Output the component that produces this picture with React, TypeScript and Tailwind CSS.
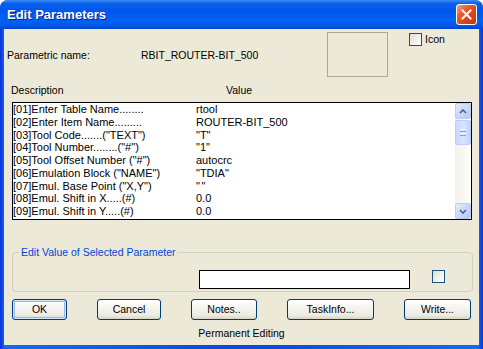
import React from "react";

const rows: [string, string][] = [
  ["[01]Enter Table Name........", "rtool"],
  ["[02]Enter Item Name.........", "ROUTER-BIT_500"],
  ["[03]Tool Code.......(\"TEXT\")", "\"T\""],
  ["[04]Tool Number........(\"#\")", "\"1\""],
  ["[05]Tool Offset Number (\"#\")", "autocrc"],
  ["[06]Emulation Block (\"NAME\")", "\"TDIA\""],
  ["[07]Emul. Base Point (\"X,Y\")", "\"\""],
  ["[08]Emul. Shift in X.....(#)", "0.0"],
  ["[09]Emul. Shift in Y.....(#)", "0.0"],
];

function XPCheck() {
  return (
    <div className="w-[13px] h-[13px] border border-[#1c5180] bg-[linear-gradient(135deg,#dcdcd7_0%,#f3f3f0_60%,#ffffff_100%)] shrink-0" />
  );
}

function XPButton({ label, w, def }: { label: string; w: string; def?: boolean }) {
  return (
    <div
      className={`${w} h-[21px] rounded-[3px] border border-[#003c74] bg-[linear-gradient(180deg,#ffffff_0%,#f5f4ef_40%,#ecebe4_80%,#d8d4c8_100%)] flex items-center justify-center ${
        def ? "shadow-[inset_0_0_0_1px_#cee7ff,inset_0_0_0_2px_#98b8ea]" : ""
      }`}
    >
      <span className="leading-[13px]">{label}</span>
    </div>
  );
}

function ScrollBtn({ up }: { up?: boolean }) {
  return (
    <div className="w-[16px] h-[16px] rounded-[2px] border border-[#b9cdf8] bg-[linear-gradient(135deg,#e3ebfd_0%,#c9d8fc_50%,#b5c9f8_100%)] flex items-center justify-center">
      <svg width="8" height="5" viewBox="0 0 8 5">
        <path
          d={up ? "M1 4 L4 1 L7 4" : "M1 1 L4 4 L7 1"}
          fill="none"
          stroke="#4d6185"
          strokeWidth="1.6"
        />
      </svg>
    </div>
  );
}

export default function App() {
  return (
    <div
      className="w-[483px] h-[349px] rounded-t-[8px] bg-[linear-gradient(90deg,#0831d9_0%,#166aee_1%,#0a48dd_50%,#166aee_99%,#0831d9_100%)] flex flex-col overflow-hidden text-black"
      style={{ fontFamily: '"Liberation Sans", Arial, sans-serif' }}
    >
      {/* Title bar */}
      <div className="h-[29px] shrink-0 flex items-center pl-[7px] pr-[6px] bg-[linear-gradient(180deg,#3d8cf5_0%,#0a60ea_12%,#0056ea_35%,#0062f5_70%,#0058e8_88%,#0042cc_100%)]">
        <span className="text-white font-bold text-[13px] leading-[16px] [text-shadow:1px_1px_0_#0a1b8f] flex-1 pt-[1px]">
          Edit Parameters
        </span>
        <div className="w-[21px] h-[21px] rounded-[3px] border border-white bg-[linear-gradient(135deg,#f4a58c_0%,#e85a2c_35%,#d4431a_70%,#c0380e_100%)] flex items-center justify-center">
          <svg width="11" height="11" viewBox="0 0 11 11">
            <path d="M1.5 1.5 L9.5 9.5 M9.5 1.5 L1.5 9.5" stroke="white" strokeWidth="2" strokeLinecap="square" />
          </svg>
        </div>
      </div>

      {/* Body */}
      <div className="flex-1 mx-[4px] mb-[4px] bg-[#ece9d8] flex flex-col text-[10.5px]">
        {/* Top row */}
        <div className="h-[54px] flex items-start pt-[3px] shrink-0">
          <div className="w-[323px] pl-[3px] pt-[17px] flex leading-[13px]">
            <span className="w-[134px]">Parametric name:</span>
            <span>RBIT_ROUTER-BIT_500</span>
          </div>
          <div className="w-[61px] h-[45px] border border-[#aca899]" />
          <div className="ml-[21px] mt-[1px] flex items-center gap-[3px]">
            <XPCheck />
            <span className="leading-[13px]">Icon</span>
          </div>
        </div>

        {/* Header */}
        <div className="h-[19px] shrink-0 flex pt-[1px] leading-[13px]">
          <span className="w-[222px] pl-[7px]">Description</span>
          <span>Value</span>
        </div>

        {/* List */}
        <div className="ml-[8px] w-[460px] h-[118px] border border-black bg-white flex shrink-0">
          <div className="flex-1 overflow-hidden text-[11px]">
            {rows.map(([d, v]) => (
              <div key={d} className="flex leading-[12.75px] whitespace-nowrap">
                <span className="w-[183px]">{d}</span>
                <span className={v === '""' ? "tracking-[1.5px]" : ""}>{v}</span>
              </div>
            ))}
          </div>
          <div className="w-[16px] flex flex-col bg-[linear-gradient(90deg,#f3f1ec_0%,#fefefb_100%)]">
            <ScrollBtn up />
            <div className="w-[16px] h-[25px] mt-[1px] rounded-[2px] border border-[#b9cdf8] bg-[linear-gradient(90deg,#c9d8fc_0%,#d9e4fd_50%,#c3d4fb_100%)] flex flex-col items-center justify-center gap-[1px]">
              <div className="w-[6px] h-[1px] bg-[#eef3ff]" />
              <div className="w-[6px] h-[1px] bg-[#8ca4d8]" />
              <div className="w-[6px] h-[1px] bg-[#eef3ff]" />
              <div className="w-[6px] h-[1px] bg-[#8ca4d8]" />
            </div>
            <div className="flex-1" />
            <ScrollBtn />
          </div>
        </div>

        {/* Group box */}
        <div className="relative ml-[8px] mt-[32px] w-[461px] h-[40px] border border-[#d0d0bf] rounded-[4px] shrink-0">
          <span className="absolute left-[6px] top-[-7px] px-[2px] bg-[#ece9d8] text-[#0046d5] leading-[13px]">
            Edit Value of Selected Parameter
          </span>
          <div className="flex items-start pt-[17px] pl-[186px]">
            <div className="w-[211px] h-[19px] border border-black bg-white" />
            <div className="ml-[22px]">
              <XPCheck />
            </div>
          </div>
        </div>

        {/* Buttons */}
        <div className="mt-[7px] pl-[8px] flex gap-[30px] shrink-0">
          <XPButton label="OK" w="w-[55px]" def />
          <XPButton label="Cancel" w="w-[64px]" />
          <XPButton label="Notes.." w="w-[66px]" />
          <XPButton label="TaskInfo..." w="w-[87px]" />
          <XPButton label="Write..." w="w-[67px]" />
        </div>

        <div className="mt-[7px] text-center leading-[13px]">Permanent Editing</div>
      </div>
    </div>
  );
}
